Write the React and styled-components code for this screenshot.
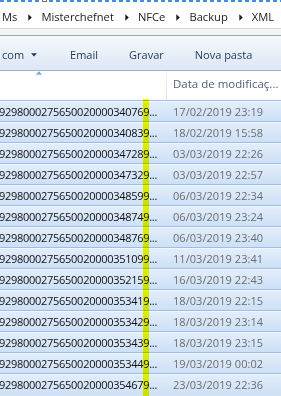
import React from 'react';
import styled, { createGlobalStyle } from 'styled-components';

const Global = createGlobalStyle`
  html, body { margin: 0; padding: 0; background: #fff; }
  body { font-family: "Open Sans", "Noto Sans", sans-serif; }
`;

const Window = styled.div`
  position: relative;
  width: 281px;
  height: 396px;
  overflow: hidden;
  display: flex;
  flex-direction: column;
  background: #fff;
`;

const SelectionEdge = styled.div`
  position: relative;
  flex: none;
  height: 2px;
  background: repeating-linear-gradient(90deg, #3a8fe4 0 4px, transparent 4px 7px);
`;

const Handle = styled.span`
  position: absolute;
  left: 42px;
  top: -3px;
  width: 5px;
  height: 5px;
  box-sizing: border-box;
  border: 1px solid #6b6b6b;
  background: #fff;
`;

const AddressBar = styled.nav`
  flex: none;
  height: 27px;
  box-sizing: border-box;
  padding: 4px 0 0 2px;
  display: flex;
  align-items: center;
  background: #fff;
  border-bottom: 1px solid #d8d8d8;
  font-size: 11.2px;
  line-height: 22px;
  color: #1c1c1c;
  white-space: nowrap;
`;

const Crumb = styled.span`
  margin-right: 11px;
`;

const CrumbArrow = styled.svg`
  flex: none;
  margin-right: 9px;
  margin-top: 1px;
`;

const FrameStrip = styled.div`
  flex: none;
  height: 7px;
  box-sizing: border-box;
  background: #f4f5f6;
  border-bottom: 1px solid #a3a3a3;
`;

const CommandBar = styled.div`
  flex: none;
  height: 35px;
  box-sizing: border-box;
  padding: 3px 0 0 2px;
  display: flex;
  align-items: center;
  gap: 31px;
  background: linear-gradient(#f6f9fd, #e9f0f9 50%, #dce6f4);
  border-bottom: 1px solid #a4b3c6;
  font-size: 11px;
  color: #1e395b;
  white-space: nowrap;
`;

const CommandButton = styled.span`
  display: flex;
  align-items: center;
  gap: 7px;
  padding-right: ${p => (p.$first ? 2 : 0)}px;
`;

const ListView = styled.section`
  position: relative;
  flex: 1;
  min-height: 0;
  display: flex;
  flex-direction: column;
`;

const HeaderRow = styled.div`
  flex: none;
  height: 29px;
  display: grid;
  grid-template-columns: 166px 1fr;
  background: #fff;
`;

const HeaderCell = styled.div`
  position: relative;
  display: flex;
  align-items: center;
  box-sizing: border-box;
  padding: 0 0 5px ${p => p.$pad || 0}px;
  border-left: ${p => (p.$sep ? '1px solid' : 'none')};
  border-image: linear-gradient(#f3f5f8, #dce2ea) 1;
  font-size: 11.5px;
  color: #4c5f7a;
  white-space: nowrap;
  overflow: hidden;
`;

const SortArrow = styled.svg`
  position: absolute;
  left: 35px;
  top: 0;
`;

const Rows = styled.div`
  flex: 1;
  display: flex;
  flex-direction: column;
  background: #d2e3f7;
`;

const Row = styled.div`
  flex: none;
  height: 21px;
  box-sizing: border-box;
  display: grid;
  grid-template-columns: 166px 1fr;
  border-top: 1px solid #9fbee6;
  background: linear-gradient(#e3eefb, #cde0f6);
  box-shadow: inset 0 1px 0 rgba(255, 255, 255, 0.5);
  font-size: 11px;
  line-height: 19px;
  white-space: nowrap;
`;

const NameCell = styled.div`
  padding-top: 1px;
  overflow: hidden;
  text-indent: -1px;
  letter-spacing: -0.28px;
  color: #111;
`;

const DateCell = styled.div`
  padding: 1px 0 0 7px;
  overflow: hidden;
  color: #6d6d6d;
  letter-spacing: 0.05px;
`;

const Marker = styled.div`
  position: absolute;
  left: 143px;
  width: 6px;
  top: 28px;
  bottom: 0;
  background: #fbff00;
  mix-blend-mode: multiply;
  pointer-events: none;
`;

const files = [
  ['9298000275650020000340769...', '17/02/2019 23:19'],
  ['9298000275650020000340839...', '18/02/2019 15:58'],
  ['9298000275650020000347289...', '03/03/2019 22:26'],
  ['9298000275650020000347329...', '03/03/2019 22:57'],
  ['9298000275650020000348599...', '06/03/2019 22:34'],
  ['9298000275650020000348749...', '06/03/2019 23:24'],
  ['9298000275650020000348769...', '06/03/2019 23:40'],
  ['9298000275650020000351099...', '11/03/2019 23:41'],
  ['9298000275650020000352159...', '16/03/2019 22:43'],
  ['9298000275650020000353419...', '18/03/2019 22:15'],
  ['9298000275650020000353429...', '18/03/2019 23:14'],
  ['9298000275650020000353439...', '18/03/2019 23:15'],
  ['9298000275650020000353449...', '19/03/2019 00:02'],
  ['9298000275650020000354679...', '23/03/2019 22:36'],
];

const crumbs = ['Ms', 'Misterchefnet', 'NFCe', 'Backup', 'XML'];

const Arrow = () => (
  <CrumbArrow width="4" height="7" viewBox="0 0 4 7">
    <polygon points="0.3,0.3 3.8,3.5 0.3,6.7" fill="#1a1a1a" />
  </CrumbArrow>
);

export default function App() {
  return (
    <>
      <Global />
      <Window>
        <SelectionEdge>
          <Handle />
        </SelectionEdge>
        <AddressBar>
          {crumbs.map((c, i) => (
            <React.Fragment key={c}>
              <Crumb>{c}</Crumb>
              {i < crumbs.length - 1 && <Arrow />}
            </React.Fragment>
          ))}
        </AddressBar>
        <FrameStrip />
        <CommandBar>
          <CommandButton $first>
            com
            <svg width="6" height="4" viewBox="0 0 6 4">
              <polygon points="0,0.2 6,0.2 3,3.6" fill="#1e395b" />
            </svg>
          </CommandButton>
          <CommandButton>Email</CommandButton>
          <CommandButton>Gravar</CommandButton>
          <CommandButton>Nova pasta</CommandButton>
        </CommandBar>
        <ListView>
          <HeaderRow>
            <HeaderCell>
              <SortArrow width="8" height="5" viewBox="0 0 8 5">
                <defs>
                  <linearGradient id="sa" x1="0" y1="0" x2="0" y2="1">
                    <stop offset="0" stopColor="#4a86bd" />
                    <stop offset="1" stopColor="#b9d4ec" />
                  </linearGradient>
                </defs>
                <polygon points="4,0.3 7.7,4.2 0.3,4.2" fill="url(#sa)" />
              </SortArrow>
            </HeaderCell>
            <HeaderCell $sep $pad={6}>Data de modificaç...</HeaderCell>
          </HeaderRow>
          <Rows>
            {files.map(([name, date]) => (
              <Row key={name}>
                <NameCell>{name}</NameCell>
                <DateCell>{date}</DateCell>
              </Row>
            ))}
          </Rows>
          <Marker />
        </ListView>
      </Window>
    </>
  );
}
